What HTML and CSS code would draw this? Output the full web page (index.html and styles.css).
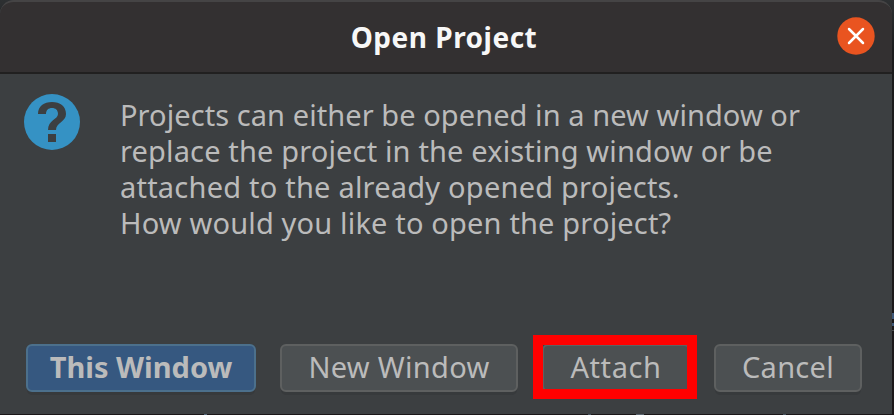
FILE: index.html
```html
<!DOCTYPE html>
<html lang="en">
<head>
<meta charset="utf-8">
<title>Open Project</title>
<link rel="stylesheet" href="styles.css">
</head>
<body>
<main class="dialog">
  <header class="titlebar">
    <h1 class="title">Open Project</h1>
    <button class="close" aria-label="Close">
      <svg viewBox="0 0 38 38" width="38" height="38"><circle cx="19" cy="19" r="18.7" fill="#e95420"/><path d="M12 12L26 26M26 12L12 26" stroke="#fff" stroke-width="2.5" stroke-linecap="round"/></svg>
    </button>
  </header>
  <section class="content">
    <svg class="question" viewBox="0 0 56 56" width="56" height="56"><circle cx="28" cy="28" r="28" fill="#3592c4"/><path d="M14 20C14 12 20 8 28 8S42 12 42 20C42 28 32 28.5 32 36H24C24 26 34 25.5 34 20C34 16 31.5 14 28 14S22 16 22 20ZM24 40h8v8h-8z" fill="#3c3f41"/></svg>
    <p class="message">
      <span class="line l1">Projects can either be opened in a new window or</span>
      <span class="line l2">replace the project in the existing window or be</span>
      <span class="line l3">attached to the already opened projects.</span>
      <span class="line l4">How would you like to open the project?</span>
    </p>
  </section>
  <footer class="actions">
    <button class="btn primary">This Window</button>
    <button class="btn new">New Window</button>
    <button class="btn attach">Attach</button>
    <button class="btn cancel">Cancel</button>
  </footer>
</main>
</body>
</html>
```
FILE: styles.css
```css
*, *::before, *::after { box-sizing: border-box; }
body {
  margin: 0;
  width: 894px;
  height: 415px;
  overflow: hidden;
  background:
    linear-gradient(#3e5878, #3e5878) 892px 313px / 2px 6px no-repeat,
    linear-gradient(#3e5878, #3e5878) 892px 323px / 2px 3px no-repeat,
    linear-gradient(#4a4c4e, #4a4c4e) 892px 330px / 2px 1px no-repeat,
    linear-gradient(#56697c, #56697c) 204px 414px / 3px 1px no-repeat,
    linear-gradient(#46525e, #46525e) 588px 414px / 3px 1px no-repeat,
    linear-gradient(#5c6670, #5c6670) 636px 414px / 8px 1px no-repeat,
    linear-gradient(#46525e, #46525e) 783px 414px / 3px 1px no-repeat,
    linear-gradient(#2d3032 0, #1b1b1c 50px, #1b1718 100%);
  font-family: "Noto Sans", "Open Sans", sans-serif;
}
.dialog {
  width: 892px;
  height: 414px;
  display: flex;
  flex-direction: column;
  background: #3c3f41;
  border-radius: 14px 14px 0 0;
  overflow: hidden;
}
.titlebar {
  flex: none;
  height: 74px;
  display: grid;
  grid-template-columns: 56px 1fr 55px;
  align-items: center;
  background: #333031;
  border-top: 2px solid #454445;
  border-bottom: 2px solid #212020;
  border-radius: 14px 14px 0 0;
}
.title {
  grid-column: 2;
  margin: 0 0 0 -5px;
  text-align: center;
  font-size: 28px;
  line-height: 38px;
  letter-spacing: 0.5px;
  font-weight: 700;
  color: #f7f7f7;
  white-space: nowrap;
}
.close {
  width: 38px;
  height: 38px;
  margin-bottom: 2px;
  padding: 0;
  border: 0;
  background: none;
}
.close svg { display: block; }
.content {
  flex: none;
  display: flex;
  height: 270px;
  padding: 20px 24px 0;
  gap: 40px;
}
.question { flex: none; }
.message {
  margin: 3px 0 0;
  font-size: 29px;
  line-height: 36px;
  color: #bbb;
}
.line { display: block; white-space: nowrap; width: max-content; }
.l1 { letter-spacing: 0.07px; }
.l2 { letter-spacing: 0.15px; }
.l3 { letter-spacing: 0.22px; }
.l4 { letter-spacing: 0.17px; }
.actions {
  display: flex;
  gap: 24px;
  padding-left: 26px;
}
.btn {
  position: relative;
  height: 48px;
  padding: 0 0 2px;
  border: 2px solid #5e6060;
  border-radius: 6px;
  background: #4c5052;
  box-shadow: 0 4px 0 -1px #373a3c;
  color: #bbb;
  font: 29px/40px "Noto Sans", "Open Sans", sans-serif;
  white-space: nowrap;
}
.primary {
  width: 230px;
  background: #365880;
  border-color: #4c708c;
  font-weight: 700;
}
.new { width: 238px; letter-spacing: 0.3px; }
.attach { width: 148px; letter-spacing: 0.6px; }
.cancel { width: 148px; letter-spacing: 0.3px; }
.attach::after {
  content: "";
  position: absolute;
  left: -11px;
  top: -11px;
  width: 164px;
  height: 64px;
  border: 10px solid #f00;
}
```
